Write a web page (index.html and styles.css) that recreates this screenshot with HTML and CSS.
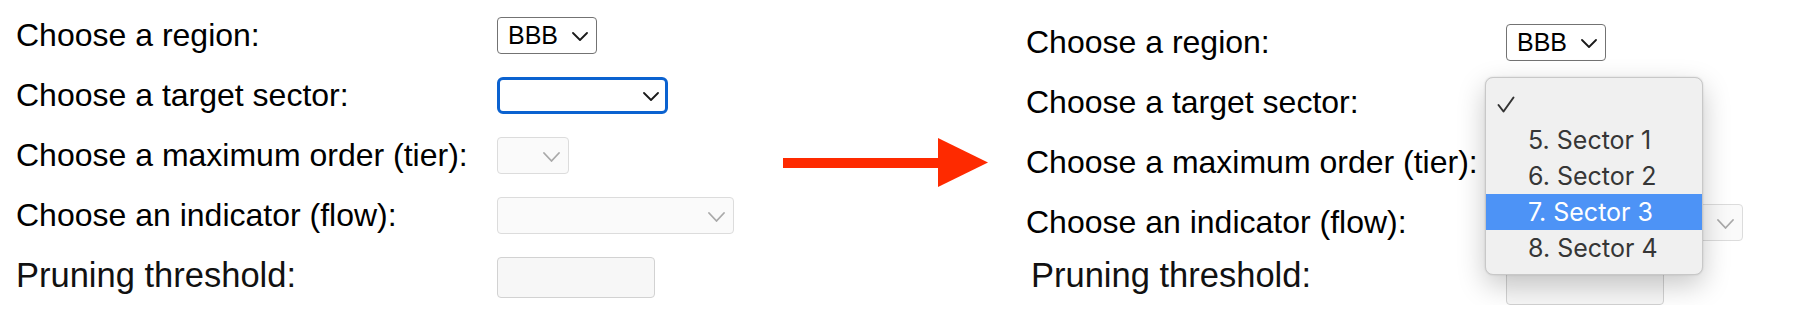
FILE: index.html
```html
<!DOCTYPE html>
<html lang="en">
<head>
<meta charset="utf-8">
<title>Select sector</title>
<link rel="stylesheet" href="styles.css">
</head>
<body>
<main class="stage">
  <section class="form form-before">
    <div class="label">Choose a region:</div>
    <div class="select select-region">
      <span class="value">BBB</span>
      <svg class="chev" viewBox="0 0 16 9" width="16" height="9"><polyline points="1,1 8,8 15,1"/></svg>
    </div>

    <div class="label">Choose a target sector:</div>
    <div class="select select-sector focused">
      <span class="value"></span>
      <svg class="chev" viewBox="0 0 16 9" width="16" height="9"><polyline points="1,1 8,8 15,1"/></svg>
    </div>

    <div class="label">Choose a maximum order (tier):</div>
    <div class="select select-tier disabled">
      <span class="value"></span>
      <svg class="chev" viewBox="0 0 17 10" width="17" height="10"><polyline points="1,1 8.5,9 16,1"/></svg>
    </div>

    <div class="label">Choose an indicator (flow):</div>
    <div class="select select-flow disabled">
      <span class="value"></span>
      <svg class="chev" viewBox="0 0 17 10" width="17" height="10"><polyline points="1,1 8.5,9 16,1"/></svg>
    </div>

    <div class="label label-pruning">Pruning threshold:</div>
    <div class="input disabled"></div>
  </section>

  <svg class="arrow" viewBox="0 0 205 49" width="205" height="49">
    <rect x="0" y="20" width="156" height="10"/>
    <polygon points="155,0 205,24.5 155,49"/>
  </svg>

  <section class="form form-after">
    <div class="label">Choose a region:</div>
    <div class="select select-region">
      <span class="value">BBB</span>
      <svg class="chev" viewBox="0 0 16 9" width="16" height="9"><polyline points="1,1 8,8 15,1"/></svg>
    </div>

    <div class="label">Choose a target sector:</div>
    <div class="menu-anchor">
      <div class="select select-sector">
        <span class="value"></span>
        <svg class="chev" viewBox="0 0 16 9" width="16" height="9"><polyline points="1,1 8,8 15,1"/></svg>
      </div>
      <ul class="menu">
        <li class="item checked"><svg class="check" viewBox="0 0 18 17" width="18" height="17"><polyline points="1.5,9 6.5,15.5 16.5,1.5"/></svg></li>
        <li class="item">5. Sector 1</li>
        <li class="item">6. Sector 2</li>
        <li class="item active">7. Sector 3</li>
        <li class="item">8. Sector 4</li>
      </ul>
    </div>

    <div class="label">Choose a maximum order (tier):</div>
    <div class="select select-tier disabled">
      <span class="value"></span>
      <svg class="chev" viewBox="0 0 17 10" width="17" height="10"><polyline points="1,1 8.5,9 16,1"/></svg>
    </div>

    <div class="label">Choose an indicator (flow):</div>
    <div class="select select-flow disabled">
      <span class="value"></span>
      <svg class="chev" viewBox="0 0 17 10" width="17" height="10"><polyline points="1,1 8.5,9 16,1"/></svg>
    </div>

    <div class="label label-pruning label-pruning-after">Pruning threshold:</div>
    <div class="input disabled"></div>
  </section>
</main>
</body>
</html>
```

FILE: styles.css
```css
* { box-sizing: border-box; }

html, body {
  margin: 0;
  padding: 0;
  background: #ffffff;
}

body {
  font-family: "Liberation Sans", Arial, Helvetica, sans-serif;
  color: #000;
}

.stage {
  display: flex;
  align-items: flex-start;
  padding: 17px 0 0 16px;
}

.form {
  display: grid;
  grid-template-columns: 481px auto;
  grid-template-rows: 37px 37px 37px 37px 41px;
  row-gap: 23px;
  align-items: center;
}

.form-before {
  width: 767px;
}

.form-after {
  grid-template-columns: 480px auto;
  margin-left: 38px;
  margin-top: 7px;
}

.label {
  font-size: 32px;
  line-height: 37px;
  white-space: nowrap;
  justify-self: start;
}

.label-pruning {
  font-size: 34.5px;
  color: #111;
  margin-bottom: 5px;
}

.label-pruning-after {
  padding-left: 5px;
  margin-bottom: 19px;
}

.arrow {
  margin-top: 121px;
  fill: #fe2a00;
  flex: none;
}

.select {
  height: 37px;
  display: flex;
  align-items: center;
  justify-content: space-between;
  padding: 0 8px 0 10px;
  border: 1.5px solid #737373;
  border-radius: 4px;
  background: #fff;
  font-size: 25px;
  color: #000;
}

.select .value {
  line-height: 1;
}

.chev {
  fill: none;
  stroke: #1a1a1a;
  stroke-width: 1.8;
  stroke-linecap: round;
  stroke-linejoin: round;
  margin-top: 2px;
}

.select-region { width: 100px; }

.select-sector { width: 171px; }

.select-tier { width: 72px; }

.select-flow { width: 237px; }

.select.focused {
  border: 3px solid #0b62d0;
  border-radius: 6px;
  padding: 0 6px 0 8px;
}

.select.disabled {
  background: #fafafa;
  border-color: #dcdcdc;
}

.select.disabled .chev {
  stroke: #a9a9a9;
}

.input {
  width: 158px;
  height: 41px;
  border: 1.5px solid #d2d2d2;
  border-radius: 4px;
  background: #f7f7f7;
}

.menu-anchor {
  position: relative;
  width: 171px;
}

.menu {
  position: absolute;
  left: -21px;
  top: -7px;
  width: 218px;
  margin: 0;
  padding: 8px 0;
  list-style: none;
  background: #f0f0f0;
  border: 1px solid #c8c8c8;
  border-radius: 8px;
  box-shadow: 0 10px 28px rgba(0, 0, 0, 0.22), 0 0 2px rgba(0, 0, 0, 0.15);
  font-family: Inter, "Noto Sans", sans-serif;
  font-size: 25px;
  color: #363636;
  z-index: 2;
}

.item {
  height: 36px;
  line-height: 36px;
  padding-left: 42px;
  white-space: nowrap;
}

.item.checked {
  padding-left: 11px;
  display: flex;
  align-items: center;
}

.check {
  fill: none;
  stroke: #333;
  stroke-width: 2;
  stroke-linecap: round;
  stroke-linejoin: round;
}

.item.active {
  background: #4d93f6;
  color: #fff;
}
```
